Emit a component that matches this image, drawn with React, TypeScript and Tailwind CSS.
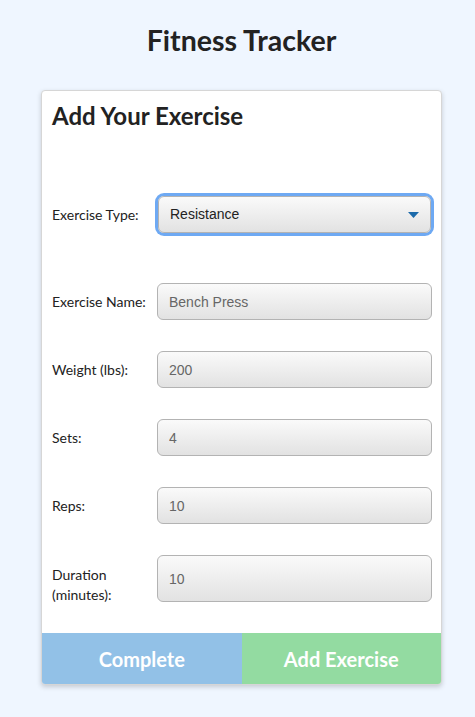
import React, { useState } from 'react';

const fields = [
  { label: 'Exercise Name:', value: 'Bench Press' },
  { label: 'Weight (lbs):', value: '200' },
  { label: 'Sets:', value: '4' },
  { label: 'Reps:', value: '10' },
];

export default function App() {
  const [type, setType] = useState('Resistance');

  return (
    <div className="min-h-screen bg-[#eff6ff] pl-[8px] font-['Lato',sans-serif] text-[#222]">
      <h1 className="pt-[22px] text-center text-[28.5px] font-bold leading-[36px]">Fitness Tracker</h1>

      <div className="mx-auto mt-[32px] w-[401px] overflow-hidden rounded-[4px] border border-[#d6d6d6] bg-white shadow-[0_2px_5px_rgba(0,0,0,0.18)]">
        <div className="pl-[10px] pr-[9px] pt-[9px]">
          <h2 className="text-[24px] font-bold leading-[32px]">Add Your Exercise</h2>

          <div className="mt-[64px] flex items-center">
            <label className="w-[105px] text-[14px]">Exercise Type:</label>
            <div className="relative mx-px flex-1">
              <select
                value={type}
                onChange={(e) => setType(e.target.value)}
                className="h-[37px] w-full appearance-none rounded-[6px] border border-[#b3b3b3] bg-gradient-to-b from-[#fafafa] to-[#e2e2e2] pl-[11px] font-['Liberation_Sans',Arial,sans-serif] text-[14px] text-[#222] outline-none ring-[3px] ring-[#6ea9f3]"
              >
                <option>Resistance</option>
                <option>Cardio</option>
              </select>
              <svg className="pointer-events-none absolute right-[12px] top-[16px]" width="11" height="6" viewBox="0 0 11 6">
                <path d="M0 0h11L5.5 6z" fill="#1c6aaa" />
              </svg>
            </div>
          </div>

          <div className="mt-[50px] flex flex-col gap-[31px]">
            {fields.map((f) => (
              <div key={f.label} className="flex items-center">
                <label className="w-[105px] text-[14px]">{f.label}</label>
                <input
                  defaultValue={f.value}
                  className="h-[37px] flex-1 rounded-[6px] border border-[#b3b3b3] bg-gradient-to-b from-[#fafafa] to-[#e2e2e2] px-[11px] font-['Liberation_Sans',Arial,sans-serif] text-[14px] text-[#666] outline-none"
                />
              </div>
            ))}
            <div className="flex h-[47px] items-start">
              <label className="w-[105px] pt-[10px] text-[14px] leading-[20px]">
                Duration
                <br />
                (minutes):
              </label>
              <input
                defaultValue="10"
                className="h-[47px] flex-1 rounded-[6px] border border-[#b3b3b3] bg-gradient-to-b from-[#fafafa] to-[#e2e2e2] px-[11px] font-['Liberation_Sans',Arial,sans-serif] text-[14px] text-[#666] outline-none"
              />
            </div>
          </div>
        </div>

        <div className="mt-[31px] flex h-[51px]">
          <button className="flex-1 bg-[#92c1e7] text-[20px] font-bold text-white">Complete</button>
          <button className="flex-1 bg-[#93dba1] text-[20px] font-bold text-white">Add Exercise</button>
        </div>
      </div>
    </div>
  );
}
